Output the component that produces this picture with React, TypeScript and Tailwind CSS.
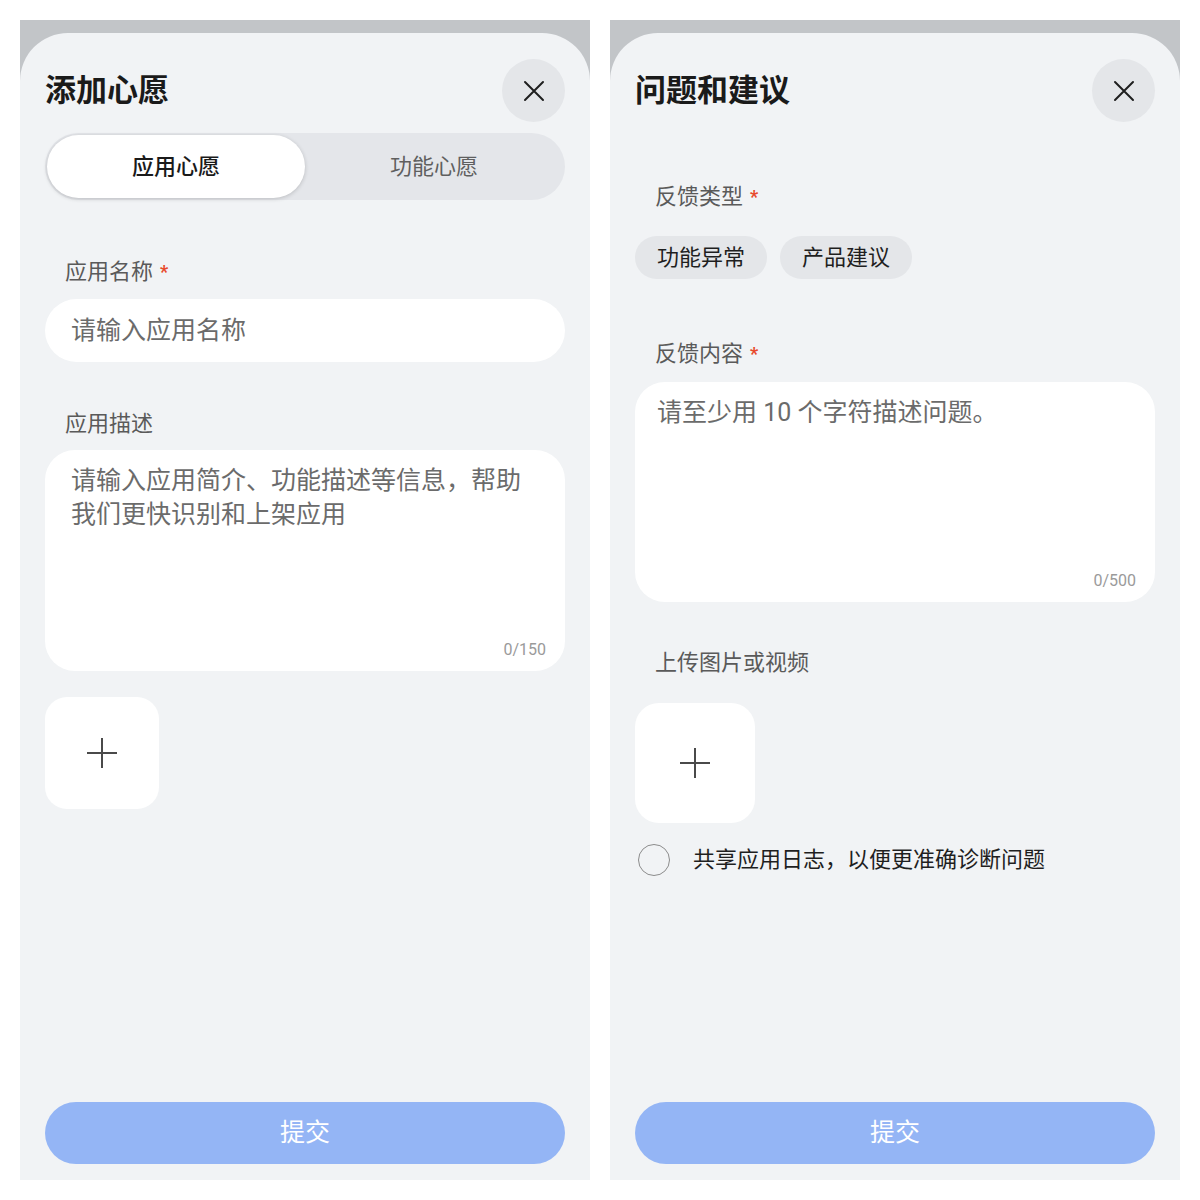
import React from "react";

function CloseBtn() {
  return (
    <div className="w-[63px] h-[63px] rounded-full bg-[#e4e6e9] flex items-center justify-center shrink-0">
      <svg width="22" height="22" viewBox="0 0 22 22" fill="none">
        <path d="M2 2L20 20M20 2L2 20" stroke="#1f1f1f" strokeWidth="2" strokeLinecap="round" />
      </svg>
    </div>
  );
}

function Plus() {
  return (
    <svg width="32" height="32" viewBox="0 0 32 32" fill="none">
      <path d="M16 1V31M1 16H31" stroke="#4a4a4a" strokeWidth="2" />
    </svg>
  );
}

function Label({ text, required, className = "" }: { text: string; required?: boolean; className?: string }) {
  return (
    <div className={"flex items-center text-[22px] leading-[30px] text-[#5a5a5a] " + className}>
      <span>{text}</span>
      {required && <span className="ml-[7px] text-[#e84a2c] text-[18px] leading-[30px] font-bold">*</span>}
    </div>
  );
}

function Header({ title }: { title: string }) {
  return (
    <div className="flex items-center justify-between pt-[26px]">
      <div className="text-[31px] leading-[40px] font-bold text-[#1a1a1a]">{title}</div>
      <CloseBtn />
    </div>
  );
}

function SubmitBtn() {
  return (
    <div className="mt-auto h-[62px] rounded-full bg-[#94b5f5] flex items-center justify-center text-white text-[25px] leading-[30px]">
      提交
    </div>
  );
}

function Panel({ children }: { children: React.ReactNode }) {
  return (
    <div className="w-[570px] h-[1160px] bg-[#c2c5c8] pt-[13px] flex flex-col">
      <div className="flex-1 bg-[#f1f3f5] rounded-t-[48px] px-[25px] pb-[16px] flex flex-col">{children}</div>
    </div>
  );
}

export default function App() {
  return (
    <div className="w-[1200px] h-[1200px] bg-white p-[20px] flex gap-[20px] font-['Roboto','Noto_Sans_CJK_SC',sans-serif]">
      <Panel>
        <Header title="添加心愿" />
        <div className="mt-[11px] h-[67px] rounded-full bg-[#e4e6ea] p-[2px] flex">
          <div className="flex-1 rounded-full bg-white shadow-[0_1px_4px_rgba(0,0,0,0.18)] flex items-center justify-center text-[22px] leading-[30px] font-medium text-[#1a1a1a]">
            应用心愿
          </div>
          <div className="flex-1 flex items-center justify-center text-[22px] leading-[30px] text-[#5f5f5f]">
            功能心愿
          </div>
        </div>
        <Label text="应用名称" required className="mt-[57px] pl-[20px]" />
        <div className="mt-[12px] h-[63px] rounded-full bg-white flex items-center pl-[26px] text-[25px] leading-[34px] text-[#6b6b6b]">
          请输入应用名称
        </div>
        <Label text="应用描述" className="mt-[47px] pl-[20px]" />
        <div className="mt-[11px] h-[221px] rounded-[30px] bg-white flex flex-col px-[26px] pt-[14px] pb-[11px]">
          <div className="text-[25px] leading-[34px] text-[#6b6b6b] pr-[4px]">
            请输入应用简介、功能描述等信息，帮助我们更快识别和上架应用
          </div>
          <div className="mt-auto self-end text-[16px] leading-[20px] text-[#9a9a9a] mr-[-7px]">0/150</div>
        </div>
        <div className="mt-[26px] w-[114px] h-[112px] rounded-[22px] bg-white flex items-center justify-center">
          <Plus />
        </div>
        <SubmitBtn />
      </Panel>
      <Panel>
        <Header title="问题和建议" />
        <Label text="反馈类型" required className="mt-[60px] pl-[20px]" />
        <div className="mt-[24px] flex gap-[13px]">
          <div className="h-[43px] px-[22px] rounded-full bg-[#e4e6e9] flex items-center text-[22px] leading-[30px] text-[#1f1f1f]">
            功能异常
          </div>
          <div className="h-[43px] px-[22px] rounded-full bg-[#e4e6e9] flex items-center text-[22px] leading-[30px] text-[#1f1f1f]">
            产品建议
          </div>
        </div>
        <Label text="反馈内容" required className="mt-[60px] pl-[20px]" />
        <div className="mt-[13px] h-[220px] rounded-[30px] bg-white flex flex-col px-[22px] pt-[14px] pb-[11px]">
          <div className="text-[25px] leading-[34px] text-[#6b6b6b]">请至少用 10 个字符描述问题。</div>
          <div className="mt-auto self-end text-[16px] leading-[20px] text-[#9a9a9a] mr-[-3px]">0/500</div>
        </div>
        <Label text="上传图片或视频" className="mt-[46px] pl-[20px]" />
        <div className="mt-[25px] w-[120px] h-[120px] rounded-[24px] bg-white flex items-center justify-center">
          <Plus />
        </div>
        <div className="mt-[21px] flex items-center h-[32px]">
          <div className="ml-[3px] w-[32px] h-[32px] rounded-full border-[1.5px] border-[#8c8c8c]" />
          <div className="ml-[23px] text-[22px] leading-[30px] text-[#1f1f1f]">共享应用日志，以便更准确诊断问题</div>
        </div>
        <SubmitBtn />
      </Panel>
    </div>
  );
}
